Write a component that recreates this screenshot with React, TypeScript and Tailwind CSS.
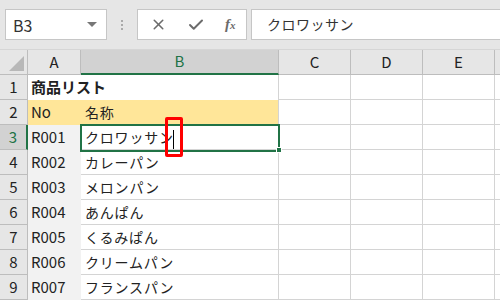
import { X, Check } from "lucide-react";

const rows = [
  { n: 1, a: "商品リスト", b: "", bold: true },
  { n: 2, a: "No", b: "名称", yellow: true },
  { n: 3, a: "R001", b: "クロワッサン" },
  { n: 4, a: "R002", b: "カレーパン" },
  { n: 5, a: "R003", b: "メロンパン" },
  { n: 6, a: "R004", b: "あんぱん" },
  { n: 7, a: "R005", b: "くるみぱん" },
  { n: 8, a: "R006", b: "クリームパン" },
  { n: 9, a: "R007", b: "フランスパン" },
];

const font = "font-['Noto_Sans_CJK_JP','Noto_Sans',sans-serif]";

export default function App() {
  return (
    <div className={`relative flex h-[300px] w-[500px] flex-col overflow-hidden bg-[#e6e6e6] text-[#222] ${font}`}>
      {/* formula bar */}
      <div className="flex h-[50px] shrink-0 items-center border-b border-[#d6d6d6] pl-[5px]">
        <div className="flex h-[31px] w-[102px] items-center justify-between border border-[#c6c6c6] bg-white pl-[7px] pr-[9px]">
          <span className="text-[16px] text-[#333]">B3</span>
          <span className="h-0 w-0 border-x-[5px] border-t-[5px] border-x-transparent border-t-[#777]" />
        </div>
        <div className="flex w-[30px] flex-col items-center gap-[2px]">
          <span className="h-[2px] w-[2px] bg-[#aaa]" />
          <span className="h-[2px] w-[2px] bg-[#aaa]" />
          <span className="h-[2px] w-[2px] bg-[#aaa]" />
        </div>
        <div className="flex h-[31px] w-[110px] items-center border border-[#c6c6c6] bg-white pl-[12px] text-[#6b6b6b]">
          <X size={17} strokeWidth={2.2} />
          <Check size={18} strokeWidth={2.6} className="ml-[20px]" />
          <span className="ml-[20px] font-['Liberation_Serif',serif] text-[15px] italic font-bold">
            f<span className="text-[11px]">x</span>
          </span>
        </div>
        <div className="ml-[4px] flex h-[31px] flex-1 items-center border border-r-0 border-[#c6c6c6] bg-white pl-[15px] text-[14px] tracking-[0.5px] text-[#333]">
          クロワッサン
        </div>
      </div>

      {/* column headers */}
      <div className="grid h-[25px] shrink-0 grid-cols-[28px_53px_198px_72px_72px_72px_1fr] text-[15px]">
        <div className="relative border-r border-b border-[#bdbdbd]">
          <svg className="absolute bottom-[3px] right-[3px]" width="15" height="15" viewBox="0 0 15 15">
            <polygon points="15,0 15,15 0,15" fill="#b8b8b8" />
          </svg>
        </div>
        <div className="flex items-center justify-center border-r border-b border-[#bdbdbd]">A</div>
        <div className="flex items-center justify-center border-b-2 border-r border-b-[#217346] border-r-[#bdbdbd] bg-[#d2d2d2] text-[#217346]">B</div>
        <div className="flex items-center justify-center border-r border-b border-[#bdbdbd]">C</div>
        <div className="flex items-center justify-center border-r border-b border-[#bdbdbd]">D</div>
        <div className="flex items-center justify-center border-r border-b border-[#bdbdbd]">E</div>
        <div className="border-b border-[#bdbdbd]" />
      </div>

      {/* rows */}
      {rows.map((r) => {
        const sel = r.n === 3;
        return (
          <div key={r.n} className="grid h-[25px] shrink-0 grid-cols-[28px_53px_198px_72px_72px_72px_1fr] bg-white text-[15px]">
            <div
              className={`flex items-center justify-center border-b border-[#bdbdbd] ${
                sel ? "border-r-2 border-r-[#217346] bg-[#d2d2d2] text-[#217346]" : "border-r border-r-[#bdbdbd] bg-[#e6e6e6]"
              }`}
            >
              {r.n}
            </div>
            <div
              className={`flex items-center whitespace-nowrap pl-[3px] ${
                r.yellow ? "bg-[#ffe699]" : r.n >= 3 ? "bg-[#f2f2f2]" : "bg-white"
              } ${r.bold ? "font-bold" : ""}`}
            >
              {r.a}
            </div>
            <div
              className={`flex items-center whitespace-nowrap border-r border-b border-[#d4d4d4] pl-[4px] text-[14px] tracking-[0.8px] ${
                r.yellow ? "border-b-0 bg-[#ffe699]" : ""
              } ${r.n === 1 ? "border-b-0" : ""}`}
            >
              {r.b}
            </div>
            <div className="border-r border-b border-[#d4d4d4]" />
            <div className="border-r border-b border-[#d4d4d4]" />
            <div className="border-r border-b border-[#d4d4d4]" />
            <div className="border-b border-[#d4d4d4]" />
          </div>
        );
      })}

      {/* selection box around B3 */}
      <div className="pointer-events-none absolute left-[80px] top-[124px] h-[28px] w-[200px] border-2 border-[#217346]" />
      <div className="pointer-events-none absolute left-[276px] top-[147px] h-[6px] w-[6px] border border-white bg-[#217346]" />

      {/* text cursor */}
      <div className="absolute left-[173px] top-[130px] h-[19px] w-[1px] bg-black" />

      {/* red highlight */}
      <div className="absolute left-[165px] top-[117px] h-[40px] w-[18px] rounded-[2px] border-[3px] border-[#ff0000]" />
    </div>
  );
}
